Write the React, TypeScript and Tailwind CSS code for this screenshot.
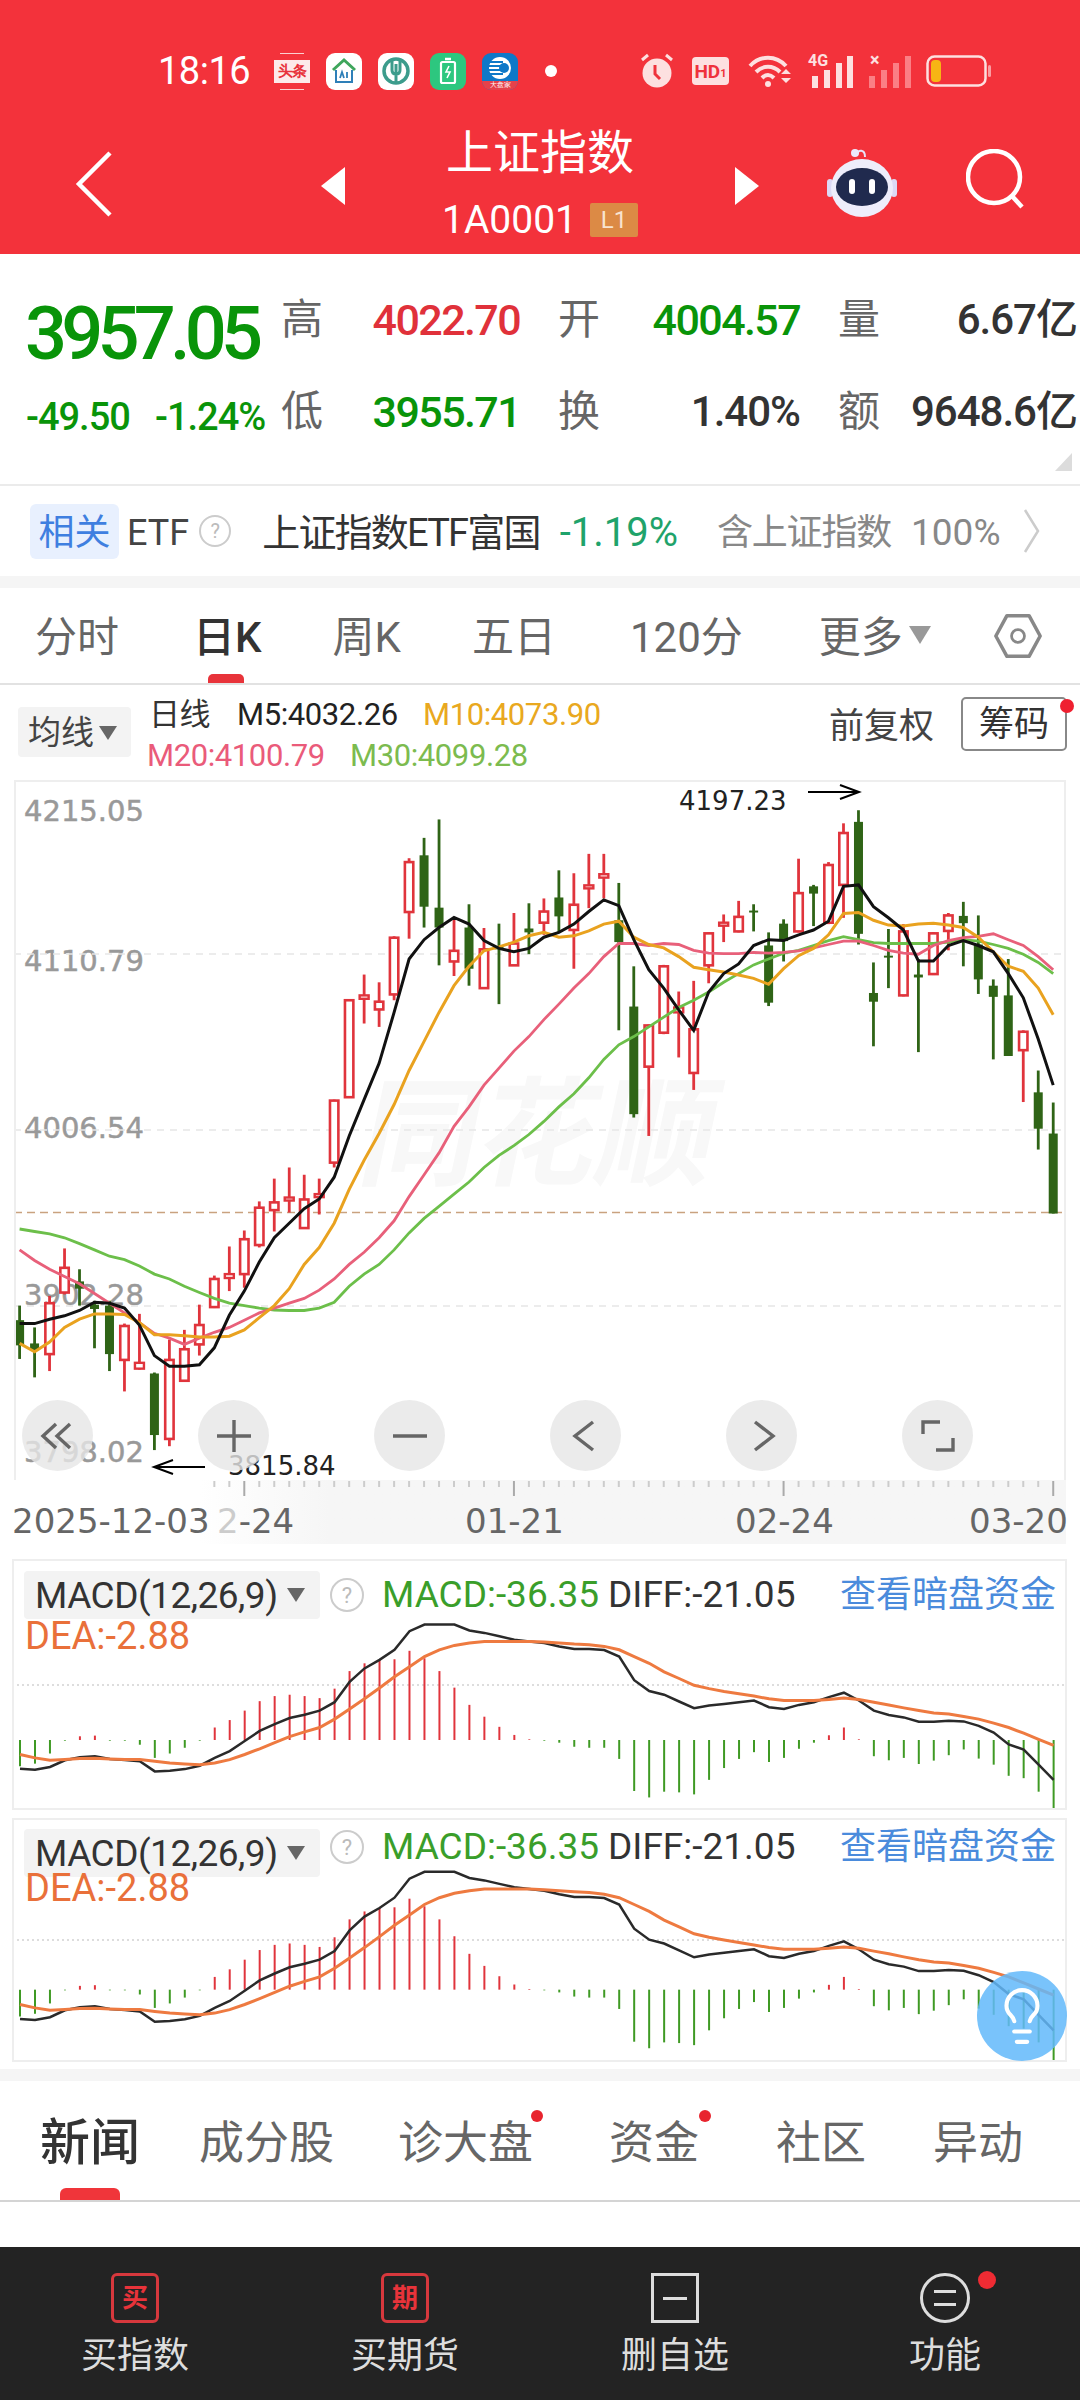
import { Lightbulb } from "lucide-react";

// candles as [wickTop, bodyTop, bodyBottom, wickBottom, up], read from the reference
const candles: [number, number, number, number, number][] = [
  [1105, 1135, 1187, 1215, 0], [1150, 1183, 1197, 1253, 0], [1085, 1100, 1205, 1240, 1], [987, 1027, 1078, 1082, 1],
  [1030, 1055, 1070, 1105, 0], [1095, 1103, 1112, 1193, 0], [1095, 1105, 1205, 1240, 0], [1142, 1147, 1217, 1282, 1],
  [1122, 1223, 1235, 1237, 1], [1243, 1245, 1372, 1403, 0], [1175, 1217, 1380, 1395, 1], [1155, 1195, 1260, 1260, 1],
  [1103, 1145, 1185, 1208, 1], [1043, 1050, 1108, 1110, 1], [983, 1040, 1048, 1075, 1], [950, 968, 1040, 1068, 1],
  [890, 903, 980, 985, 1], [843, 892, 908, 952, 1], [820, 882, 888, 913, 1], [835, 886, 945, 945, 1],
  [843, 875, 880, 917, 1], [680, 682, 810, 820, 1], [473, 475, 675, 675, 1], [422, 465, 472, 523, 1],
  [438, 478, 494, 530, 1], [343, 346, 463, 475, 1], [182, 190, 293, 348, 1], [140, 176, 282, 325, 0],
  [102, 284, 325, 403, 0], [305, 373, 395, 425, 1], [277, 325, 410, 445, 0], [326, 370, 450, 450, 1],
  [317, 365, 370, 483, 0], [295, 358, 403, 403, 1], [275, 327, 335, 380, 0], [265, 292, 315, 340, 1],
  [207, 263, 302, 335, 0], [213, 278, 330, 410, 1], [173, 238, 243, 285, 1], [173, 215, 222, 265, 1],
  [233, 310, 355, 537, 0], [405, 488, 710, 717, 0], [525, 527, 612, 755, 1], [402, 405, 542, 545, 1],
  [457, 490, 500, 593, 1], [435, 535, 625, 660, 1], [335, 337, 403, 440, 1], [298, 315, 320, 355, 1],
  [270, 303, 333, 335, 1], [277, 290, 294, 333, 0], [335, 362, 480, 487, 0], [308, 317, 353, 395, 0],
  [183, 254, 333, 335, 1], [237, 240, 255, 322, 0], [190, 196, 315, 318, 1], [110, 130, 237, 305, 1],
  [83, 107, 338, 360, 0], [397, 460, 478, 570, 0], [328, 383, 387, 450, 0], [318, 333, 465, 467, 1],
  [390, 422, 428, 582, 0], [335, 337, 421, 423, 1], [295, 300, 332, 372, 1], [272, 301, 316, 405, 0],
  [300, 360, 432, 462, 0], [432, 445, 468, 597, 0], [390, 465, 590, 590, 0], [537, 540, 578, 685, 1],
  [620, 665, 740, 783, 0], [686, 750, 915, 915, 0],
];

const m5 = [1142, 1142, 1133, 1126, 1115, 1098, 1100, 1110, 1145, 1208, 1230, 1230, 1227, 1192, 1125, 1075, 1015, 965, 935, 905, 885, 840, 755, 680, 605, 500, 390, 350, 325, 304, 318, 352, 368, 375, 368, 345, 335, 318, 292, 268, 280, 350, 412, 450, 495, 537, 458, 420, 400, 362, 350, 352, 340, 330, 312, 240, 237, 282, 305, 330, 394, 394, 362, 352, 362, 375, 420, 470, 555, 650];
const m10 = [1183, 1200, 1180, 1150, 1133, 1122, 1122, 1123, 1140, 1165, 1165, 1167, 1170, 1170, 1168, 1155, 1130, 1105, 1070, 1020, 985, 935, 865, 805, 750, 690, 620, 560, 500, 445, 405, 373, 365, 355, 342, 335, 345, 342, 332, 318, 312, 345, 360, 367, 385, 407, 412, 417, 423, 430, 442, 410, 383, 368, 340, 296, 294, 310, 320, 322, 318, 316, 320, 325, 345, 375, 405, 415, 450, 505];
const m20 = [990, 1012, 1030, 1045, 1060, 1080, 1100, 1120, 1140, 1162, 1172, 1185, 1172, 1160, 1150, 1135, 1120, 1110, 1100, 1090, 1073, 1050, 1020, 995, 965, 930, 880, 835, 790, 735, 695, 650, 615, 580, 550, 515, 483, 450, 420, 385, 358, 358, 362, 358, 360, 372, 378, 379, 379, 376, 378, 376, 373, 367, 360, 353, 353, 362, 372, 378, 380, 362, 352, 346, 343, 338, 350, 362, 385, 412];
const m30 = [947, 952, 957, 965, 977, 990, 1003, 1010, 1023, 1040, 1050, 1065, 1078, 1090, 1100, 1105, 1110, 1114, 1115, 1115, 1110, 1098, 1065, 1040, 1020, 990, 955, 925, 900, 875, 850, 820, 795, 775, 752, 725, 695, 668, 635, 597, 567, 550, 530, 510, 490, 475, 458, 438, 420, 402, 390, 378, 372, 362, 352, 344, 350, 356, 358, 358, 358, 358, 355, 350, 353, 360, 368, 380, 397, 420];

const macdBars = [670, 662, 632, 594, 581, 579, 594, 594, 606, 645, 632, 615, 594, 555, 533, 505, 477, 462, 458, 462, 468, 440, 388, 365, 355, 353, 328, 350, 388, 437, 488, 523, 553, 577, 590, 594, 600, 612, 615, 615, 648, 743, 762, 745, 747, 753, 710, 675, 648, 628, 657, 645, 618, 600, 578, 555, 590, 640, 652, 645, 663, 653, 637, 620, 647, 665, 698, 705, 745, 798];
const diff = [677, 680, 672, 652, 643, 640, 648, 651, 655, 685, 683, 678, 668, 645, 625, 595, 565, 545, 527, 517, 505, 480, 420, 380, 355, 325, 270, 250, 250, 250, 268, 275, 285, 295, 300, 305, 315, 323, 323, 326, 345, 415, 447, 458, 478, 498, 490, 485, 480, 475, 495, 500, 488, 480, 465, 452, 475, 505, 518, 525, 538, 538, 535, 537, 550, 570, 605, 620, 665, 710];
const dea = [635, 645, 652, 650, 647, 646, 648, 650, 650, 655, 660, 663, 665, 660, 650, 635, 618, 600, 582, 568, 555, 530, 500, 470, 438, 405, 375, 345, 325, 312, 305, 300, 300, 300, 300, 302, 305, 308, 310, 315, 325, 345, 365, 390, 410, 430, 440, 448, 455, 462, 470, 475, 475, 475, 472, 468, 472, 480, 488, 497, 505, 512, 515, 522, 530, 542, 555, 572, 590, 608];

const cx = (i: number) => 5.6 + i * 14.98;
const cy = (z: number) => z / 2.063 - 10;
const linePts = (arr: number[]) => arr.map((v, i) => `${cx(i).toFixed(1)},${cy(v).toFixed(1)}`).join(" ");

const CN = "font-['Roboto','Noto_Sans_CJK_SC',sans-serif]";
const DJ = "font-['DejaVu_Sans',sans-serif]";

const AppIcon = ({ cls, children }: { cls: string; children: React.ReactNode }) => (
  <div className={`flex h-[37px] w-[36px] items-center justify-center overflow-hidden rounded-[9px] ${cls}`}>{children}</div>
);

const StatusBar = () => (
  <div className="mt-[49px] flex h-[44px] items-center pl-[158px]">
    <span className="w-[116px] text-[38px] leading-none tracking-[-0.5px] text-[#fff]">18:16</span>
    <div className="flex gap-[16px]">
      <div className="relative flex h-[37px] w-[36px] items-center justify-center">
        <div className="absolute left-[6px] right-[6px] top-0 h-[1px] bg-[#fbd0d0]" />
        <div className="absolute bottom-0 left-[6px] right-[6px] h-[1px] bg-[#fbd0d0]" />
        <span className="flex h-[23px] w-[36px] items-center justify-center bg-[#fdeaea] text-[15px] font-bold leading-none tracking-[-1px] text-[#e8333c]">头条</span>
      </div>
      <AppIcon cls="bg-white">
        <svg width="28" height="28" viewBox="0 0 28 28" fill="none">
          <path d="M3 13 14 3l11 10" stroke="#3fa65c" strokeWidth="3" />
          <path d="M6 13v12h16V13" stroke="#2e7fb8" strokeWidth="2" />
          <path d="M10 21l2-6 2 6M17 15v6" stroke="#2e7fb8" strokeWidth="1.8" />
        </svg>
      </AppIcon>
      <AppIcon cls="bg-white">
        <svg width="30" height="30" viewBox="0 0 30 30" fill="none">
          <circle cx="15" cy="15" r="12" stroke="#3c9c8c" strokeWidth="3.5" />
          <path d="M11 3v11c0 3 2 4 4 4s4-1 4-4V3M15 8v20" stroke="#3c9c8c" strokeWidth="3" />
        </svg>
      </AppIcon>
      <AppIcon cls="bg-[#2dc77f]">
        <svg width="20" height="28" viewBox="0 0 20 28" fill="none">
          <path d="M7 2h6" stroke="#fff" strokeWidth="2.5" />
          <rect x="3" y="5" width="14" height="21" rx="1.5" stroke="#fff" strokeWidth="2.2" />
          <path d="M11 9l-3 6h4l-3 6" stroke="#fff" strokeWidth="1.6" />
        </svg>
      </AppIcon>
      <AppIcon cls="relative bg-[#0f78c8]">
        <svg width="36" height="37" viewBox="0 0 36 37" fill="none">
          <circle cx="18" cy="15" r="11" fill="#fff" />
          <path d="M7 9h14M6 13h15M6 17h15M8 21h13" stroke="#0f78c8" strokeWidth="2" />
          <circle cx="22" cy="15" r="5" fill="#0f78c8" />
        </svg>
        <span className="absolute bottom-0 left-0 right-0 bg-[#e6414a] text-center text-[7px] leading-[9px] text-white">大盘家</span>
      </AppIcon>
    </div>
    <div className="ml-[27px] h-[12px] w-[12px] rounded-full bg-white" />
    <svg className="ml-[83px]" width="34" height="36" viewBox="0 0 34 36" fill="none">
      <path d="M2 7l6-5M32 7l-6-5" stroke="#fde0e0" strokeWidth="3" />
      <circle cx="17" cy="20" r="14.5" fill="#fde0e0" />
      <path d="M15 12v9l5 5" stroke="#ef323c" strokeWidth="3" />
    </svg>
    <div className="ml-[18px] flex h-[28px] w-[37px] items-center justify-center rounded-[4px] bg-[#fde0e0] text-[19px] font-bold leading-none text-[#ef323c]">
      HD<span className="mt-[4px] text-[11px]">1</span>
    </div>
    <svg className="ml-[19px]" width="45" height="32" viewBox="0 0 45 32" fill="none">
      <path d="M2 11C12 0 28 0 38 11" stroke="#fde0e0" strokeWidth="4" />
      <path d="M8 17c7-7 17-7 24 0" stroke="#fde0e0" strokeWidth="4" />
      <path d="M14 23c4-4 8-4 12 0" stroke="#fde0e0" strokeWidth="4" />
      <circle cx="20" cy="29" r="3" fill="#fde0e0" />
      <path d="M33 19l5-5 5 5zM33 23h10l-5 5z" fill="#fde0e0" />
    </svg>
    <div className="relative ml-[15px] h-[33px] w-[45px]">
      <span className="absolute left-0 top-[-2px] text-[16px] font-bold leading-none text-[#fde0e0]">4G</span>
      <svg className="absolute inset-0" width="45" height="33" viewBox="0 0 45 33" fill="#fde0e0">
        <rect x="4" y="21" width="6" height="12" />
        <rect x="16" y="15" width="6" height="18" />
        <rect x="28" y="8" width="6" height="25" />
        <rect x="39" y="1" width="6" height="32" />
      </svg>
    </div>
    <div className="relative ml-[15px] h-[33px] w-[43px]">
      <span className="absolute left-[2px] top-[-4px] text-[18px] font-bold leading-none text-[#fde0e0]">×</span>
      <svg className="absolute inset-0" width="43" height="33" viewBox="0 0 43 33" fill="#fb7f85">
        <rect x="1" y="21" width="6" height="12" />
        <rect x="13" y="15" width="6" height="18" />
        <rect x="25" y="8" width="6" height="25" />
        <rect x="37" y="1" width="6" height="32" />
      </svg>
    </div>
    <svg className="ml-[15px]" width="66" height="32" viewBox="0 0 66 32" fill="none">
      <rect x="1.5" y="1.5" width="58" height="29" rx="7" stroke="#fde0e0" strokeWidth="2.5" />
      <rect x="5" y="5" width="10" height="22" rx="4" fill="#f7b514" />
      <rect x="62" y="10" width="3" height="12" rx="1.5" fill="#fb9ea3" />
    </svg>
  </div>
);

const NavBar = () => (
  <div className="flex h-[161px] items-center">
    <svg className="ml-[74px] mt-[20px]" width="40" height="68" viewBox="0 0 40 68" fill="none">
      <path d="M36 3 5 34l31 31" stroke="#fff" strokeWidth="4.5" />
    </svg>
    <svg className="ml-[207px] mt-[24px]" width="24" height="38" viewBox="0 0 24 38" fill="#fff">
      <path d="M24 0v38L0 19z" />
    </svg>
    <div className={`flex h-full w-[390px] flex-col items-center pt-[33px] text-white ${CN}`}>
      <div className="text-[47px] leading-[54px]">上证指数</div>
      <div className="mt-[20px] flex items-center">
        <span className="text-[39px] leading-[40px]">1A0001</span>
        <span className="ml-[13px] flex h-[34px] w-[48px] items-center justify-center rounded-[2px] bg-[#dc8a45] text-[24px] leading-none text-[#f8e3cf]">L1</span>
      </div>
    </div>
    <svg className="mt-[24px]" width="24" height="38" viewBox="0 0 24 38" fill="#fff">
      <path d="M0 0v38l24-19z" />
    </svg>
    <svg className="ml-[67px] mt-[16px]" width="72" height="70" viewBox="0 0 72 70" fill="none">
      <path d="M31 8c1-6 8-6 8 2" stroke="#e7e4f8" strokeWidth="2" />
      <circle cx="29" cy="6" r="4" fill="#ece9fb" />
      <rect x="1" y="32" width="6" height="18" rx="3" fill="#dcd9f5" />
      <rect x="65" y="32" width="6" height="18" rx="3" fill="#dcd9f5" />
      <ellipse cx="36" cy="41" rx="31" ry="29" fill="#eeedfb" />
      <ellipse cx="36" cy="40" rx="26" ry="19" fill="#202a4e" />
      <rect x="23" y="32" width="6" height="15" rx="3" fill="#fff" />
      <rect x="43" y="32" width="6" height="15" rx="3" fill="#fff" />
    </svg>
    <svg className="ml-[68px] mt-[12px]" width="62" height="62" viewBox="0 0 62 62" fill="none">
      <circle cx="28" cy="28" r="26" stroke="#fff" strokeWidth="4.5" />
      <path d="M46 47l10 11" stroke="#fff" strokeWidth="4.5" />
    </svg>
  </div>
);

const Label = ({ t }: { t: string }) => <span className="text-[42px] leading-[60px] text-[#666]">{t}</span>;

const Quote = () => (
  <div className={`relative flex h-[232px] border-b-2 border-[#ebebeb] pt-[36px] ${CN}`}>
    <div className="w-[281px] pl-[25px]">
      <div className="mt-[4px] h-[80px] text-[74px] font-medium leading-[80px] tracking-[-5.8px] text-[#099409]">3957.05</div>
      <div className="mt-[13px] flex h-[60px] items-center pl-[1px] text-[38px] font-medium tracking-[-1px] text-[#099409]">
        <span className="w-[129px]">-49.50</span>
        <span>-1.24%</span>
      </div>
    </div>
    <div className="grid h-[152px] grid-cols-[239px_242px_239px] gap-x-[38px] gap-y-[32px]">
      <div className="flex justify-between"><Label t="高" /><span className="text-[43px] font-medium leading-[60px] tracking-[-1.6px] text-[#e0313a]">4022.70</span></div>
      <div className="flex justify-between"><Label t="开" /><span className="text-[43px] font-medium leading-[60px] tracking-[-1.6px] text-[#099409]">4004.57</span></div>
      <div className="flex justify-between"><Label t="量" /><span className="text-[42px] font-medium leading-[60px] tracking-[-1px] text-[#333]">6.67亿</span></div>
      <div className="flex justify-between"><Label t="低" /><span className="text-[43px] font-medium leading-[60px] tracking-[-1.6px] text-[#099409]">3955.71</span></div>
      <div className="flex justify-between"><Label t="换" /><span className="text-[42px] font-medium leading-[60px] tracking-[-1px] text-[#333]">1.40%</span></div>
      <div className="flex justify-between"><Label t="额" /><span className="text-[42px] font-medium leading-[60px] tracking-[-1px] text-[#333]">9648.6亿</span></div>
    </div>
    <div className="absolute right-[8px] top-[199px] h-0 w-0 border-b-[18px] border-l-[17px] border-b-[#dcdcdc] border-l-transparent" />
  </div>
);

const HelpDot = ({ cls }: { cls: string }) => (
  <span className={`flex items-center justify-center rounded-full border-2 border-[#ccc] text-[#bbb] ${cls}`}>?</span>
);

const EtfRow = () => (
  <div className={`flex h-[90px] items-center pt-[4px] ${CN}`}>
    <span className="-mt-[4px] ml-[30px] flex h-[55px] w-[89px] items-center justify-center rounded-[6px] bg-[#e8f0fe] pt-[4px] text-[36px] text-[#3f7fe0]">相关</span>
    <span className="ml-[8px] text-[36px] text-[#444]">ETF</span>
    <HelpDot cls="-mt-[4px] ml-[10px] h-[32px] w-[32px] text-[20px]" />
    <span className="ml-[31px] text-[38px] tracking-[-1.8px] text-[#333]">上证指数ETF富国</span>
    <span className="ml-[20px] text-[40px] text-[#1fa36b]">-1.19%</span>
    <span className="ml-[39px] text-[36px] tracking-[-1.2px] text-[#888]">含上证指数</span>
    <span className="ml-[20px] text-[37px] text-[#888]">100%</span>
    <svg className="-mt-[4px] ml-[22px]" width="18" height="46" viewBox="0 0 18 46" fill="none">
      <path d="M2 2l13 21L2 44" stroke="#ccc" strokeWidth="2.5" />
    </svg>
  </div>
);

const Band = () => <div className="h-[12px] bg-[#f5f5f5]" />;

const PeriodTabs = () => (
  <div className={`relative flex h-[97px] items-center border-b-2 border-[#e2e2e2] pt-[4px] text-[42px] text-[#666] ${CN}`}>
    <span className="ml-[35px]">分时</span>
    <span className="ml-[74px] font-medium text-[#333]">日K</span>
    <span className="ml-[71px]">周K</span>
    <span className="ml-[71px]">五日</span>
    <span className="ml-[74px]">120分</span>
    <span className="ml-[76px]">更多</span>
    <span className="ml-[6px] mt-[-6px] h-0 w-0 border-x-[11px] border-t-[18px] border-x-transparent border-t-[#999]" />
    <svg className="-mt-[4px] ml-[63px]" width="48" height="46" viewBox="0 0 52 48" fill="none">
      <path d="M14 2h24l12 22-12 22H14L2 24z" stroke="#888" strokeWidth="3.8" strokeLinejoin="round" />
      <circle cx="26" cy="24" r="7" stroke="#888" strokeWidth="3" />
    </svg>
    <div className="absolute bottom-0 left-[208px] h-[9px] w-[36px] rounded-t-[5px] bg-[#e8333a]" />
  </div>
);

const Legend = () => (
  <div className={`relative flex h-[95px] items-start ${CN}`}>
    <div className="ml-[18px] mt-[22px] flex h-[50px] w-[113px] items-center rounded-[4px] bg-[#f3f3f3] pl-[10px] pt-[2px]">
      <span className="text-[33px] text-[#444]">均线</span>
      <span className="ml-[5px] h-0 w-0 border-x-[9px] border-t-[14px] border-x-transparent border-t-[#666]" />
    </div>
    <div className="ml-[16px] mt-[9px] text-[31px] leading-[41px] tracking-[-0.4px]">
      <div className="flex items-center">
        <span className="ml-[2px] w-[88px] text-[#333]">日线</span>
        <span className="w-[186px] text-[#222]">M5:4032.26</span>
        <span className="text-[#e9a820]">M10:4073.90</span>
      </div>
      <div className="flex items-center">
        <span className="w-[203px] text-[#ea5b7a]">M20:4100.79</span>
        <span className="text-[#7cbb4f]">M30:4099.28</span>
      </div>
    </div>
    <span className="absolute left-[829px] top-[20px] text-[35px] leading-[44px] text-[#444]">前复权</span>
    <span className="absolute left-[961px] top-[12px] flex h-[54px] w-[106px] items-center justify-center rounded-[5px] border-2 border-[#888] text-[35px] leading-none text-[#333]">筹码</span>
    <span className="absolute left-[1060px] top-[14px] h-[14px] w-[14px] rounded-full bg-[#ef2030]" />
  </div>
);

const RoundBtn = ({ d }: { d: string }) => (
  <div className="flex h-[71px] w-[71px] items-center justify-center rounded-full bg-[#e6e6e6]/80">
    <svg width="40" height="40" viewBox="0 0 40 40" fill="none">
      <path d={d} stroke="#666" strokeWidth="3.4" />
    </svg>
  </div>
);

const axisLabel = "absolute left-[8px] text-[29px] leading-[32px] text-[#999] [-webkit-text-stroke:0.5px_#999]";

const PriceChart = () => (
  <div className={`relative mx-[14px] h-[700px] w-[1052px] overflow-hidden border-2 border-b-0 border-[#eeeeee] ${DJ}`}>
    <span className={`${axisLabel} top-[13px]`}>4215.05</span>
    <span className={`${axisLabel} top-[163px]`}>4110.79</span>
    <span className={`${axisLabel} top-[330px]`}>4006.54</span>
    <span className={`${axisLabel} top-[497px]`}>3902.28</span>
    <span className={`${axisLabel} top-[654px]`}>3798.02</span>
    <span className="absolute left-[350px] top-[278px] -skew-x-12 font-['Noto_Sans_CJK_SC',sans-serif] text-[118px] font-bold leading-[130px] text-[#f8f8f8]">同花顺</span>
    <svg className="absolute left-[-2px] top-[-2px]" width="1052" height="700" viewBox="0 0 1052 700" fill="none">
      <path d="M0 174h1052M0 350h1052M0 526h1052" stroke="#e6e6e6" strokeWidth="1.5" strokeDasharray="7 6" />
      <path d="M0 432.5h1052" stroke="#c9a27f" strokeWidth="1.5" strokeDasharray="8 5" />
      {candles.map(([wt, bt, bb, wb, up], i) => {
        const x = cx(i);
        const c = up ? "#e0343c" : "#2f6416";
        const thin = bb - bt < 16;
        return (
          <g key={i}>
            <path d={`M${x} ${cy(wt)}V${cy(wb)}`} stroke={c} strokeWidth="2.8" />
            {up && !thin ? (
              <rect x={x - 4.2} y={cy(bt)} width="8.4" height={cy(bb) - cy(bt)} fill="#fff" stroke={c} strokeWidth="2.6" />
            ) : up ? (
              <rect x={x - 4.5} y={cy(bt)} width="9" height={Math.max(cy(bb) - cy(bt), 3)} fill="#fff" stroke={c} strokeWidth="2.4" />
            ) : (
              <rect x={x - 4.5} y={cy(bt)} width="9" height={cy(bb) - cy(bt)} fill={c} />
            )}
          </g>
        );
      })}
      <polyline points={linePts(m30)} stroke="#6cbf4a" strokeWidth="2.8" />
      <polyline points={linePts(m20)} stroke="#e8607a" strokeWidth="2.8" />
      <polyline points={linePts(m10)} stroke="#e9a21f" strokeWidth="3" />
      <polyline points={linePts(m5)} stroke="#111" strokeWidth="3" />
      <path d="M794 12h50m-18-7 19 7-19 7" stroke="#000" strokeWidth="2" />
      <path d="M191 687h-50m18-7-19 7 19 7" stroke="#000" strokeWidth="2" />
    </svg>
    <span className="absolute left-[663px] top-[4px] text-[26px] leading-[30px] text-[#222]">4197.23</span>
    <span className="absolute left-[212px] top-[669px] text-[26px] leading-[30px] text-[#222]">3815.84</span>
    <div className="absolute left-[6px] top-[618px] flex w-[951px] justify-between">
      <RoundBtn d="M18 8 5 20l13 12M32 8 19 20l13 12" />
      <RoundBtn d="M20 4v32M3 20h34" />
      <RoundBtn d="M3 20h34" />
      <RoundBtn d="M27 6 9 20l18 14" />
      <RoundBtn d="M13 6l18 14-18 14" />
      <RoundBtn d="M22 6H5v12M18 34h17V22" />
    </div>
  </div>
);

const DateAxis = () => (
  <div className={`relative h-[79px] text-[34px] leading-[40px] text-[#666] ${DJ}`}>
    <div className="absolute left-[200px] top-0 h-[64px] w-[866px] bg-gradient-to-r from-white to-[#f6f6f6] to-[15%]" />
    <svg className="absolute left-0 top-0" width="1080" height="20" viewBox="0 0 1080 20" fill="none">
      {candles.map((_, i) => {
        if (i < 13) return null;
        const x = 19.6 + i * 14.98;
        const major = i === 15 || i === 33 || i === 51 || i === 69;
        return <path key={i} d={`M${x} 1V${major ? 16 : 7}`} stroke={major ? "#aaa" : "#ccc"} strokeWidth="2" />;
      })}
    </svg>
    <span className="absolute left-[12px] top-[21px]">2025-12-03</span>
    <span className="absolute left-[217px] top-[21px] flex"><span className="text-[#ccc]">2</span>-24</span>
    <span className="absolute left-[465px] top-[21px]">01-21</span>
    <span className="absolute left-[735px] top-[21px]">02-24</span>
    <span className="absolute left-[969px] top-[21px]">03-20</span>
  </div>
);

const MacdPanel = ({ second }: { second?: boolean }) => {
  const top = second ? 1818 : 1559;
  const zy = (z: number) => (second ? 1331 + (z - 592) * 1.02 : z);
  const y = (z: number) => 1540 + zy(z) / 2.96 - top;
  const x = (i: number) => 8 + i * 14.98;
  const pts = (arr: number[]) => arr.map((v, i) => `${x(i).toFixed(1)},${y(v).toFixed(1)}`).join(" ");
  return (
    <div className={`relative mx-[12px] w-[1055px] overflow-hidden border-2 border-[#eeeeee] ${second ? "h-[244px] pt-[9px]" : "h-[251px] pt-[10px]"} ${CN}`}>
      <svg className="absolute left-[-2px] top-[-2px]" width="1055" height="251" viewBox="0 0 1055 251" fill="none">
        <path d={`M0 ${second ? 122 : 126}h1055`} stroke="#dddddd" strokeWidth="2" strokeDasharray="2 3" />
        {macdBars.map((v, i) => (
          <path key={i} d={`M${x(i)} ${y(592)}V${y(v)}`} stroke={v < 592 ? "#e0343c" : "#3f9a24"} strokeWidth="2" />
        ))}
        <polyline points={pts(diff)} stroke="#2a2a2a" strokeWidth="2.5" />
        <polyline points={pts(dea)} stroke="#ee7a40" strokeWidth="3" />
      </svg>
      <div className="relative flex items-start">
        <div className="ml-[10px] flex h-[48px] w-[296px] items-center rounded-[4px] bg-[#f3f3f3] pl-[11px]">
          <span className="w-[252px] text-[37px] leading-none tracking-[-0.5px] text-[#333]">MACD(12,26,9)</span>
          <span className="h-0 w-0 border-x-[9px] border-t-[14px] border-x-transparent border-t-[#666]" />
        </div>
        <div className={`flex items-center ${second ? "-mt-[6px]" : ""}`}>
          <HelpDot cls="ml-[10px] h-[34px] w-[34px] text-[22px]" />
          <div className="flex h-[48px] items-center text-[37px]">
            <span className="ml-[18px] text-[#3a9e2a]">MACD:-36.35</span>
            <span className="ml-[9px] text-[#333]">DIFF:-21.05</span>
            <span className="absolute left-[826px] text-[36px] text-[#4a8bdc]">查看暗盘资金</span>
          </div>
        </div>
      </div>
      <div className={`relative ml-[11px] text-[38px] leading-[32px] text-[#e9703a] ${second ? "-mt-[5px]" : "mt-[1px]"}`}>DEA:-2.88</div>
    </div>
  );
};

const InfoTabs = () => (
  <div className={`relative flex h-[121px] items-center border-b-2 border-[#d4d4d4] pt-[6px] text-[45px] text-[#666] ${CN}`}>
    <span className="ml-[40px] text-[50px] font-medium text-[#333]">新闻</span>
    <span className="ml-[59px]">成分股</span>
    <span className="ml-[64px]">诊大盘</span>
    <span className="ml-[76px]">资金</span>
    <span className="ml-[77px]">社区</span>
    <span className="ml-[67px]">异动</span>
    <div className="absolute left-[531px] top-[29px] h-[12px] w-[12px] rounded-full bg-[#e8242e]" />
    <div className="absolute left-[699px] top-[29px] h-[12px] w-[12px] rounded-full bg-[#e8242e]" />
    <div className="absolute bottom-0 left-[60px] h-[12px] w-[60px] rounded-t-[6px] bg-[#f0353a]" />
  </div>
);

const BottomBar = () => (
  <div className={`mt-auto grid h-[153px] grid-cols-4 bg-[#232323] text-[36px] leading-[44px] text-[#ddd] ${CN}`}>
    <div className="flex flex-col items-center pt-[26px]">
      <span className="flex h-[50px] w-[48px] items-center justify-center rounded-[6px] border-[3px] border-[#d7383d] text-[26px] font-bold leading-none text-[#e8333a]">买</span>
      <span className="mt-[11px]">买指数</span>
    </div>
    <div className="flex flex-col items-center pt-[26px]">
      <span className="flex h-[50px] w-[48px] items-center justify-center rounded-[6px] border-[3px] border-[#d7383d] text-[26px] font-bold leading-none text-[#e8333a]">期</span>
      <span className="mt-[11px]">买期货</span>
    </div>
    <div className="flex flex-col items-center pt-[26px]">
      <span className="flex h-[50px] w-[48px] items-center justify-center border-[3px] border-[#ddd]">
        <span className="h-[3px] w-[24px] bg-[#ddd]" />
      </span>
      <span className="mt-[11px]">删自选</span>
    </div>
    <div className="relative flex flex-col items-center pt-[26px]">
      <span className="flex h-[50px] w-[50px] flex-col items-center justify-center gap-[10px] rounded-full border-[3px] border-[#ddd]">
        <span className="h-[3px] w-[22px] bg-[#ddd]" />
        <span className="h-[3px] w-[22px] bg-[#ddd]" />
      </span>
      <span className="mt-[11px]">功能</span>
      <span className="absolute left-[168px] top-[24px] h-[18px] w-[18px] rounded-full bg-[#ef2b33]" />
    </div>
  </div>
);

export default function App() {
  return (
    <div className="relative flex h-[2400px] w-[1080px] flex-col overflow-hidden bg-white font-['Roboto',sans-serif]">
      <div className="h-[254px] overflow-hidden bg-[#f3323b]">
        <StatusBar />
        <NavBar />
      </div>
      <Quote />
      <EtfRow />
      <Band />
      <PeriodTabs />
      <Legend />
      <PriceChart />
      <DateAxis />
      <MacdPanel />
      <div className="h-[8px]" />
      <MacdPanel second />
      <div className="h-[7px]" />
      <Band />
      <InfoTabs />
      <BottomBar />
      {/* floating hint bubble over the second MACD chart */}
      <div className="absolute left-[977px] top-[1971px] flex h-[90px] w-[90px] items-center justify-center rounded-full bg-[#62b8fa]/85">
        <Lightbulb size={62} color="#fff" strokeWidth={1.6} />
      </div>
    </div>
  );
}
